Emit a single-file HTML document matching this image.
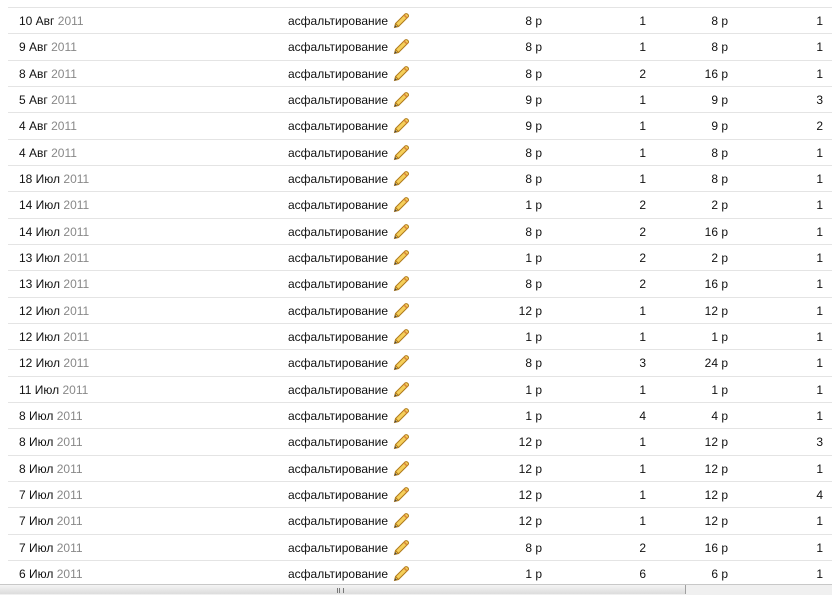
<!DOCTYPE html>
<html><head><meta charset="utf-8"><style>
body{margin:0;width:832px;height:594px;overflow:hidden;background:#fff;font-family:"Liberation Sans",Arial,sans-serif;font-size:12px;color:#111;position:relative}
.r{position:absolute;left:8px;right:0;height:26px;border-top:1px solid #e4e4e4}
.r span{position:absolute;top:6px;white-space:nowrap}
.d{left:11px}.d i{font-style:normal;color:#888}
.n{left:280px}
.n svg{position:absolute;left:105px;top:-2px}
.p{right:290px}.q{right:186px}.t{right:104px}.c{right:9px}
.sb{position:absolute;left:0;top:584px;width:832px;height:10px;background:#f0f0f0;border-top:1px solid #c8c8c8}
.th{position:absolute;left:0;top:0;width:685px;height:9px;background:linear-gradient(#f4f4f4,#dcdcdc);border-right:1px solid #a0a0a0}
.g{position:absolute;left:337px;top:3px;width:5px;height:5px;border-left:1px solid #777;border-right:1px solid #777}
.g:after{content:"";position:absolute;left:1px;top:0;width:1px;height:5px;background:#777}
</style></head><body>
<div class="r" style="top:-19px"></div>
<div id="rows"></div>
<div class="sb"><div class="th"><div class="g"></div></div></div>
<script>
var d=[["10 Авг","8","1","8","1"],["9 Авг","8","1","8","1"],["8 Авг","8","2","16","1"],["5 Авг","9","1","9","3"],["4 Авг","9","1","9","2"],["4 Авг","8","1","8","1"],["18 Июл","8","1","8","1"],["14 Июл","1","2","2","1"],["14 Июл","8","2","16","1"],["13 Июл","1","2","2","1"],["13 Июл","8","2","16","1"],["12 Июл","12","1","12","1"],["12 Июл","1","1","1","1"],["12 Июл","8","3","24","1"],["11 Июл","1","1","1","1"],["8 Июл","1","4","4","1"],["8 Июл","12","1","12","3"],["8 Июл","12","1","12","1"],["7 Июл","12","1","12","4"],["7 Июл","12","1","12","1"],["7 Июл","8","2","16","1"],["6 Июл","1","6","6","1"]];
var pen='<svg width="17" height="17" viewBox="0 0 17 17"><path d="M1.5 15.5 L2.5 11.5 L12 2 Q13.5 1 15 2.5 Q16 4 15 5 L5.5 14.5 Z" fill="#f5cf5a" stroke="#b07a1a" stroke-width="1"/><path d="M2.5 11.5 L5.5 14.5" stroke="#b07a1a"/><path d="M1.5 15.5 L2.1 13 L4 14.9 Z" fill="#444"/><path d="M11 3 L14 6" stroke="#d9843a" stroke-width="1.5"/></svg>';
var h='';
d.forEach(function(x,i){var top=Math.round(7+i*26.33);
h+='<div class="r" style="top:'+top+'px"><span class="d">'+x[0]+' <i>2011</i></span><span class="n">асфальтирование'+pen+'</span><span class="p">'+x[1]+' р</span><span class="q">'+x[2]+'</span><span class="t">'+x[3]+' р</span><span class="c">'+x[4]+'</span></div>';});
document.getElementById('rows').innerHTML=h;
</script>
</body></html>
